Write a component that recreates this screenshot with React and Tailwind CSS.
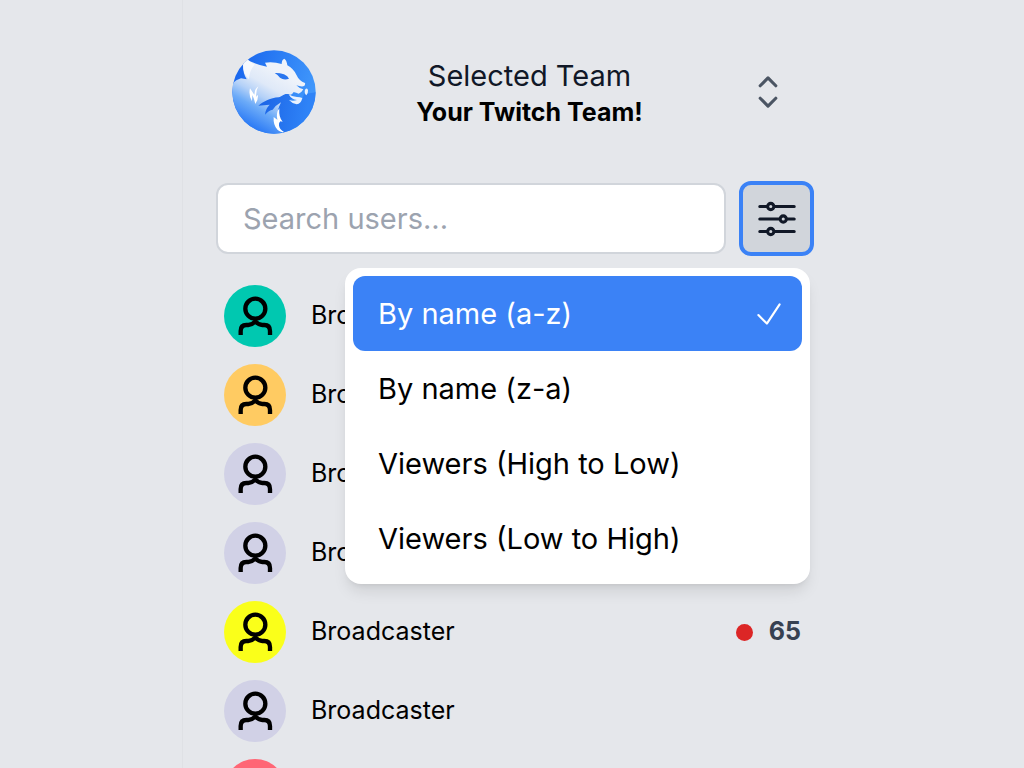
import React from "react";
import {
  HiOutlineChevronUpDown,
  HiOutlineAdjustmentsHorizontal,
  HiOutlineCheck,
} from "react-icons/hi2";

const broadcasters = [
  { id: 1, color: "bg-[#00c8b0]" },
  { id: 2, color: "bg-[#ffcb62]" },
  { id: 3, color: "bg-[#d1d1e6]" },
  { id: 4, color: "bg-[#d1d1e6]" },
  { id: 5, color: "bg-[#faff1a]", viewers: 65 },
  { id: 6, color: "bg-[#d1d1e6]" },
  { id: 7, color: "bg-[#ff6675]" },
];

const sortOptions = [
  "By name (a-z)",
  "By name (z-a)",
  "Viewers (High to Low)",
  "Viewers (Low to High)",
];

function TeamLogo() {
  return (
    <svg viewBox="24 24 252 252" className="size-[84px] shrink-0" role="img" aria-label="Team logo">
      <defs>
        <linearGradient id="sky" x1="0" y1="0" x2="1" y2="0.3">
          <stop offset="0" stopColor="#1460ec" />
          <stop offset="1" stopColor="#3f96fb" />
        </linearGradient>
        <linearGradient id="fur" gradientUnits="userSpaceOnUse" x1="170" y1="90" x2="80" y2="250">
          <stop offset="0" stopColor="#eff3fa" />
          <stop offset="0.3" stopColor="#dfe9f8" />
          <stop offset="0.5" stopColor="#b4d1f8" />
          <stop offset="0.7" stopColor="#6cabf8" />
          <stop offset="1" stopColor="#2f7df5" />
        </linearGradient>
        <linearGradient id="throat" gradientUnits="userSpaceOnUse" x1="110" y1="190" x2="250" y2="210">
          <stop offset="0" stopColor="#1c65e6" />
          <stop offset="1" stopColor="#2f83f7" />
        </linearGradient>
        <clipPath id="disc">
          <circle cx="150" cy="150" r="125" />
        </clipPath>
      </defs>
      <g clipPath="url(#disc)">
        <rect x="24" y="24" width="252" height="252" fill="url(#sky)" />
        <path
          fill="url(#fur)"
          d="M69 51 Q82 64 129 74 L123 62 Q150 59 173 66 Q173 53 181 50 Q188 54 190 70 Q208 80 217 98 Q225 116 243 123 Q245 131 238 133 Q228 134 217 130 Q226 140 238 142 Q233 152 224 155 Q213 149 208 151 Q205 160 196 158 Q186 177 168 190 Q158 207 163 226 Q151 243 158 257 Q167 270 180 280 L20 280 L20 130 Q34 113 51 109 L68 112 Q57 95 57 69 Q60 57 69 51Z"
        />
        <path
          fill="url(#throat)"
          d="M196 157 C178 153 175 164 164 166 C139 168 120 178 103 191 Q120 190 137 188 Q124 201 123 218 Q135 205 146 203 Q155 190 171 181 Q158 206 163 228 Q158 240 166 254 Q169 264 184 278 L280 280 L280 150 L240 156 Q234 181 218 187 Q203 184 195 174 Q210 170 202 165Z"
        />
        <path fill="#2a76ef" d="M152 93 Q165 92 180 97 Q192 102 195 110 Q180 116 168 107 Q161 98 152 93Z" />
        <path fill="#e8f1fe" d="M194 157 Q205 165 219 165 Q228 165 235 168 Q231 185 218 187 Q205 185 195 174 Q207 178 219 174 Q202 173 194 157Z" />
        <path fill="#e8f1fe" d="M243 143 Q250 135 252 145 Q253 155 247 160 Q240 153 243 143Z" />
        <path fill="#fff" d="M69 51 Q79 62 92 68 Q77 82 75 112 Q56 95 57 69 Q60 57 69 51Z" opacity="0.65" />
        <path fill="#fff" d="M103 133 Q91 142 91 158 L78 139 Q73 160 84 178 L85 159 Q91 171 94 186 Q103 175 102 158 L97 164 Q95 147 103 133Z" />
        <path fill="#fff" d="M166 199 Q155 213 160 233 L149 225 Q147 250 161 264 Q170 272 180 270 Q166 262 165 250 Q164 243 169 238 L176 239 Q164 228 166 199Z" />
      </g>
    </svg>
  );
}

function Avatar({ color }) {
  return (
    <span className={`block size-[62px] shrink-0 rounded-full ${color}`}>
      <svg viewBox="0 0 186 186" className="size-full" fill="none" stroke="#000" strokeWidth="13" aria-hidden="true">
        <circle cx="94" cy="71" r="30" />
        <path
          d="M50 150V138Q50 120 67 120H73Q84 120 94 109Q104 120 115 120H121Q138 120 138 138V150"
          strokeLinejoin="round"
        />
      </svg>
    </span>
  );
}

export default function App() {
  return (
    <div className="h-screen overflow-hidden bg-[#e5e7eb] font-['Inter',sans-serif] text-black">
      <aside className="mx-auto w-full max-w-[660px] border-l border-[#dfe1e5] pr-7 pl-[33px]">
        <button type="button" className="flex w-full items-center justify-between pt-[50px] pr-[21px] pl-4">
          <TeamLogo />
          <span className="flex flex-col pt-1 text-center">
            <span className="text-[29px] leading-9 text-[#111827]">Selected Team</span>
            <span className="text-[25px] leading-9 font-bold">Your Twitch Team!</span>
          </span>
          <HiOutlineChevronUpDown className="size-[50px] shrink-0 text-[#4b5563]" aria-hidden="true" />
        </button>

        <div className="relative mt-[47px] flex items-center gap-[13px]">
          <input
            type="text"
            aria-label="Search users"
            placeholder="Search users..."
            className="h-[71px] min-w-0 flex-1 rounded-xl border-2 border-[#d1d5db] bg-white px-[25px] text-[29px] placeholder:text-[#9ca3af]"
          />
          <button
            type="button"
            aria-label="Sort users"
            aria-expanded="true"
            className="flex size-[75px] shrink-0 items-center justify-center rounded-xl border-4 border-[#3b82f6] bg-[#d1d5db] text-[#111827]"
          >
            <HiOutlineAdjustmentsHorizontal className="size-[50px]" />
          </button>

          <ul
            role="listbox"
            aria-label="Sort order"
            className="absolute top-full right-1 z-10 mt-3 w-[465px] rounded-2xl bg-white p-2 shadow-lg"
          >
            {sortOptions.map((label, i) => (
              <li key={label} role="option" aria-selected={i === 0}>
                <button
                  type="button"
                  className={`flex h-[75px] w-full items-center justify-between rounded-xl pr-4 pl-[25px] text-[29px] ${
                    i === 0 ? "bg-[#3b82f6] text-white" : "text-black"
                  }`}
                >
                  {label}
                  {i === 0 && <HiOutlineCheck className="size-[34px]" aria-hidden="true" />}
                </button>
              </li>
            ))}
          </ul>
        </div>

        <ul className="mt-[29px] flex flex-col gap-[17px] pr-[13px] pl-2">
          {broadcasters.map(({ id, color, viewers }) => (
            <li key={id} className="flex items-center">
              <Avatar color={color} />
              <span className="ml-[25px] flex-1 text-[25px]">Broadcaster</span>
              {viewers && (
                <span className="flex items-center gap-4 text-[25px] font-bold text-[#374151]">
                  <span className="size-[17px] rounded-full bg-[#dc2626]" />
                  {viewers}
                </span>
              )}
            </li>
          ))}
        </ul>
      </aside>
    </div>
  );
}
